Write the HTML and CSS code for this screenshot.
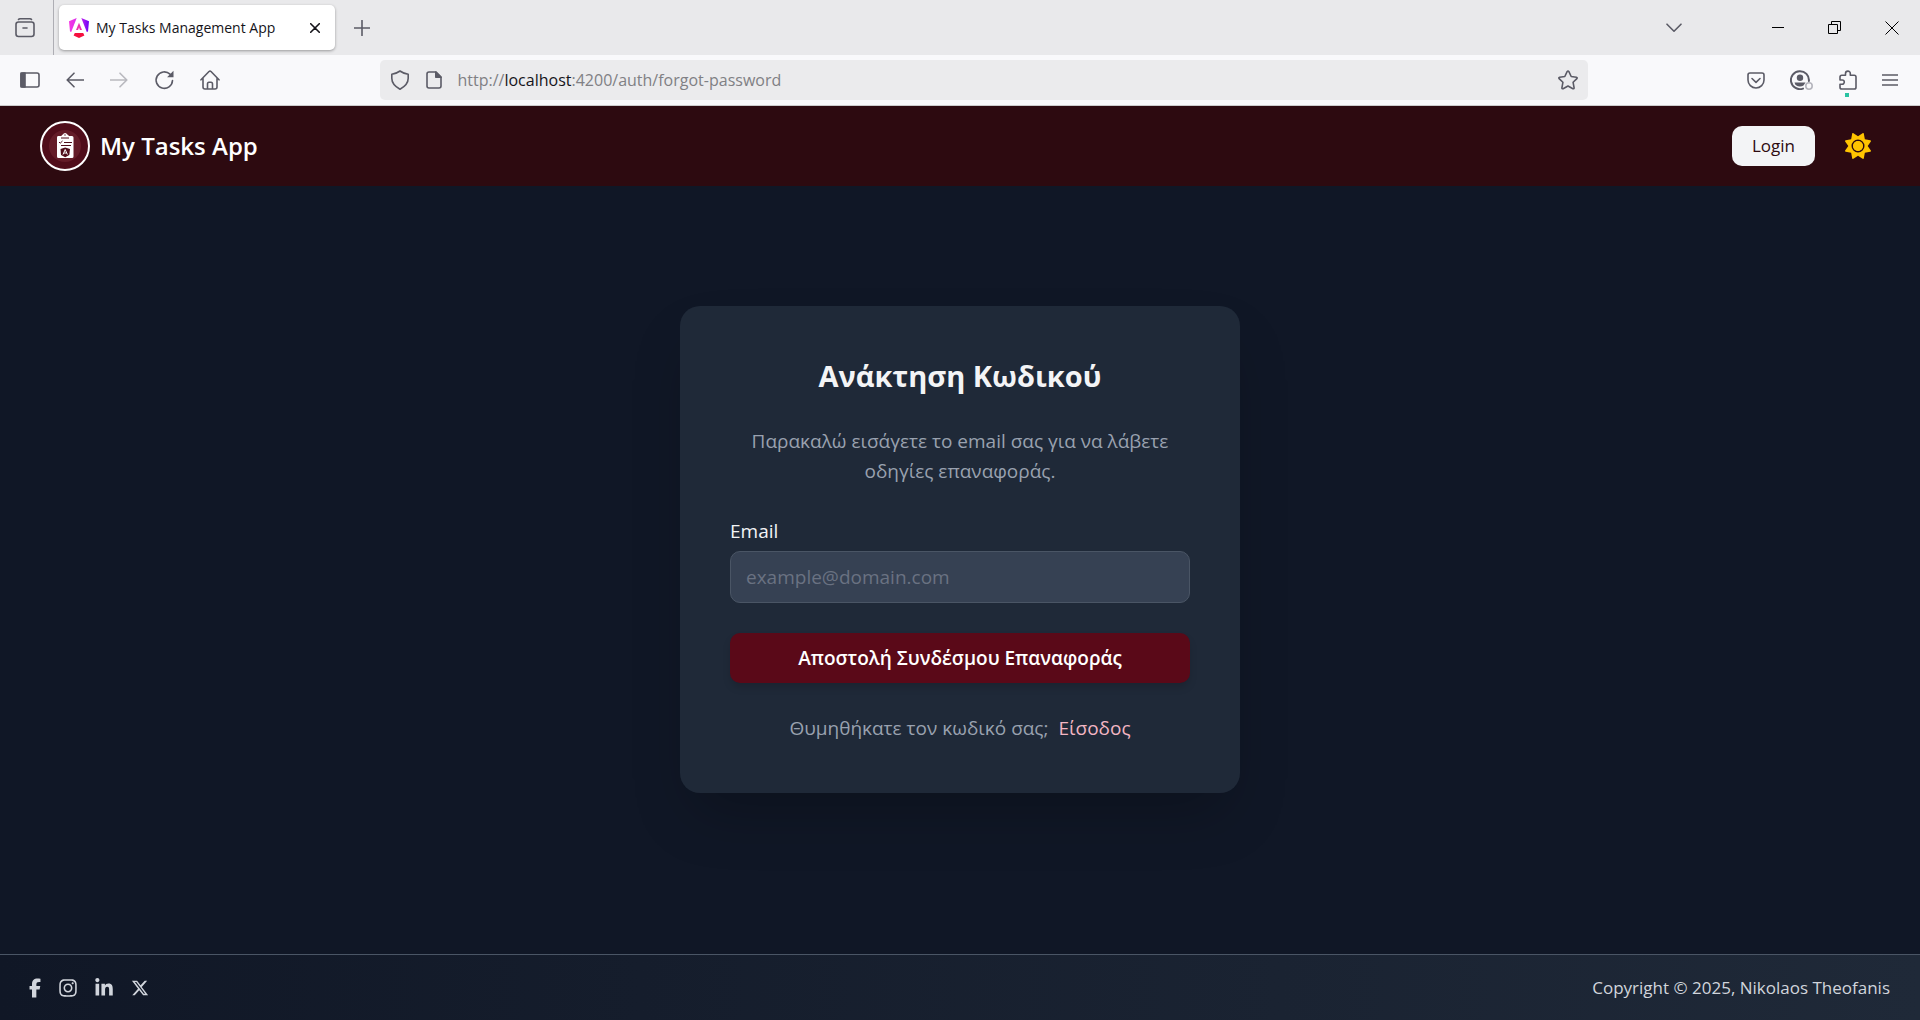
FILE: index.html
```html
<!DOCTYPE html>
<html lang="el">
<head>
<meta charset="utf-8">
<meta name="viewport" content="width=device-width, initial-scale=1">
<title>My Tasks Management App</title>
<link rel="stylesheet" href="styles.css">
</head>
<body>
<div class="browser">
  <div class="tab-strip">
    <button class="tool tool-recent" aria-label="Recent browsing">
      <svg width="20" height="20" viewBox="0 0 20 20" class="line"><path d="M3.500 1.500Q4 .8 5 .8h10q1 0 1.500.7"/><rect x="1" y="4" width="18" height="14.500" rx="2.500"/><path d="M8 10h4"/></svg>
    </button>
    <div class="tab">
      <svg width="20" height="20" viewBox="0 0 20 20" aria-hidden="true">
        <defs><linearGradient id="ng" x1="0" y1="0" x2="1" y2="0"><stop offset="0" stop-color="#f637e3"/><stop offset=".55" stop-color="#d02af0"/><stop offset="1" stop-color="#6a00f5"/></linearGradient></defs>
        <path fill="url(#ng)" d="M0 3.300 7.700 0 2.200 14 1 13.500zM20 3.300 12.300 0l5.500 14 1.200-.5z"/>
        <path fill="#ee2fae" d="M10 4.800l3 7.200H7z"/>
        <path fill="#fff" d="M10 9.600l.9 2.400H9.100z"/>
        <path fill="#f5103f" d="M5.800 15h8.400l1.200 2.500L10 20l-5.400-2.500z"/>
      </svg>
      <span class="tab-title">My Tasks Management App</span>
      <button class="tool tab-close" aria-label="Close tab"><svg width="10" height="10" viewBox="0 0 10 10" class="line dark"><path d="M.7.7l8.600 8.600M9.300.7.7 9.300"/></svg></button>
    </div>
    <button class="tool tool-new" aria-label="New tab"><svg width="16" height="16" viewBox="0 0 16 16" class="line"><path d="M8 .5v15M.5 8h15"/></svg></button>
    <div class="window-controls">
      <button class="tool" aria-label="List all tabs"><svg width="16" height="10" viewBox="0 0 16 10" class="line"><path d="M1 1.200l7 7 7-7"/></svg></button>
      <button class="tool win" aria-label="Minimize"><svg width="12" height="12" viewBox="0 0 12 12" class="win-line"><path d="M0 5.500h12"/></svg></button>
      <button class="tool win" aria-label="Restore"><svg width="13" height="13" viewBox="0 0 13 13" class="win-line"><path d="M.5 3.500h9v9h-9zM3.500 3V.5h9v9H10"/></svg></button>
      <button class="tool win" aria-label="Close"><svg width="14" height="14" viewBox="0 0 14 14" class="win-line"><path d="M.5.5l13 13M13.500.5l-13 13"/></svg></button>
    </div>
  </div>
  <div class="nav-bar">
    <div class="nav-buttons">
      <button class="tool" aria-label="Sidebar"><svg width="20" height="16" viewBox="0 0 20 16" class="line"><rect x="1" y="1" width="18" height="14" rx="2"/><path fill="#5b5b66" d="M1 1h4v14H1z"/></svg></button>
      <button class="tool" aria-label="Back"><svg width="18" height="16" viewBox="0 0 18 16" class="line"><path d="M17.500 8H1.500M8 1.200 1.200 8 8 14.800"/></svg></button>
      <button class="tool faded" aria-label="Forward"><svg width="18" height="16" viewBox="0 0 18 16" class="line"><path d="M.5 8h16M10 1.200 16.800 8 10 14.800"/></svg></button>
      <button class="tool" aria-label="Reload"><svg width="20" height="20" viewBox="0 0 20 20" class="line"><path d="M18.500 10.500A8.200 8.200 0 1 1 16 4.200"/><path fill="#5b5b66" stroke="none" d="M19.500.8v6.400H13.100z"/></svg></button>
      <button class="tool" aria-label="Home"><svg width="20" height="20" viewBox="0 0 20 20" class="line"><path d="M1 9.800 9 1.500q1-.9 2 0l8 8.300M3 8.200V17q0 2 2 2h10q2 0 2-2V8.200M7.500 19v-5q0-1.800 1.500-1.800h2q1.500 0 1.500 1.800v5"/></svg></button>
    </div>
    <div class="url-bar">
      <svg width="20" height="20" viewBox="0 0 20 20" class="line"><path d="M10 1c2.500 1.800 5 2.800 8.200 3.300v4c0 4.800-3.500 8.400-8.200 11-4.700-2.600-8.200-6.200-8.200-11v-4C5 3.800 7.500 2.800 10 1z"/></svg>
      <svg width="16" height="18" viewBox="0 0 16 18" class="line"><path d="M3 1h7l5 5v9q0 2-2 2H3q-2 0-2-2V3q0-2 2-2z"/><path fill="#5b5b66" d="M9.800 1l5.200 5.200H9.800z"/></svg>
      <span class="url">http://<span class="host">localhost</span>:4200/auth/forgot-password</span>
      <button class="tool" aria-label="Bookmark"><svg width="20" height="20" viewBox="0 0 20 20" class="line"><path d="M9.100 1.600q.9-1.300 1.800 0l2.300 4.900 5.200.7q1.300.3.500 1.400l-3.800 3.700 1 5.500q.1 1.300-1.200.9L10 16l-4.900 2.700q-1.300.4-1.200-.9l1-5.500L1.100 8.600q-.8-1.100.5-1.400l5.200-.7z"/></svg></button>
    </div>
    <div class="nav-extras">
      <button class="tool" aria-label="Pocket"><svg width="18" height="17" viewBox="0 0 18 17" class="line"><path d="M3 1h12q2 0 2 2v5a8 8 0 0 1-16 0V3q0-2 2-2z"/><path d="M5 6.500l4 3.800 4-3.800"/></svg></button>
      <button class="tool" aria-label="Account"><svg width="24" height="20" viewBox="0 0 24 20" class="line"><path d="M13 18.600A9 9 0 1 1 18.900 11" stroke-width="2"/><circle cx="10" cy="7.800" r="3.200" fill="#5b5b66" stroke="none"/><path fill="#5b5b66" stroke="none" d="M4.500 12.500h11l-2 3q-1.500 1-3.500 1-4.500 0-5.500-4z"/><circle cx="19" cy="16" r="3.200" stroke="#b5b5bd"/></svg></button>
      <button class="tool extension" aria-label="Extensions"><svg width="18" height="20" viewBox="0 0 18 20" class="line"><path d="M1 10V7q0-1.800 1.800-1.800H6.500V3.500a2.400 2.400 0 0 1 4.800 0v1.700h4Q17 5.200 17 7v10.200q0 1.800-1.700 1.800H2.800Q1 19 1 17.200v-3h2.200a2.100 2.100 0 0 0 0-4.200z"/></svg></button>
      <button class="tool" aria-label="Menu"><svg width="16" height="14" viewBox="0 0 16 14" class="line"><path d="M.5 2h15M.5 7h15M.5 12h15"/></svg></button>
    </div>
  </div>
</div>

<header class="app-header">
  <a class="brand" href="#">
    <svg width="50" height="50" viewBox="0 0 50 50" aria-hidden="true">
      <circle cx="25" cy="25" r="24" fill="#500d1a" stroke="#fff" stroke-width="2"/>
      <circle cx="25" cy="25" r="16" fill="#641c28"/>
      <path fill="#fff" d="M18 15h3.500q0-1.500 1.500-1.500a2.200 2.200 0 0 1 4.200 0q1.500 0 1.500 1.500H32q1.500 0 1.500 1.500v19q0 1.500-1.500 1.500H18.500Q17 37 17 35.500v-19Q17 15 18 15z"/>
      <path stroke="#500d1a" fill="none" d="M21 17h8M19 21l1.200 1.200L22.500 20M24 21.500h8M21 24.500h10M24.300 14h1.400"/>
      <path fill="#500d1a" d="M20.500 28l4.700-1.500L30 28l-.7 6-4.100 2.300L21 34z"/>
      <path fill="none" stroke="#fff" d="M23 33.500l2.200-5 2.200 5M24 32h2.500"/>
    </svg>
    <span class="brand-name">My Tasks App</span>
  </a>
  <div class="header-actions">
    <button class="login">Login</button>
    <button class="theme" aria-label="Theme"><svg width="26" height="26" viewBox="0 0 512 512" fill="#ffc400"><path d="M361.500 1.200c5 2.100 8.600 6.600 9.600 11.900L391 121l107.900 19.800c5.300 1 9.800 4.600 11.900 9.600s1.500 10.700-1.600 15.200L446.900 256l62.300 90.300c3.100 4.500 3.700 10.200 1.600 15.200s-6.600 8.600-11.900 9.600L391 391 371.100 498.900c-1 5.300-4.600 9.800-9.600 11.900s-10.700 1.500-15.200-1.600L256 446.900l-90.300 62.300c-4.500 3.100-10.200 3.700-15.200 1.600s-8.600-6.600-9.600-11.900L121 391 13.100 371.100c-5.300-1-9.800-4.600-11.900-9.600s-1.500-10.700 1.600-15.200L65.100 256 2.800 165.700c-3.100-4.500-3.700-10.200-1.600-15.200s6.600-8.600 11.900-9.600L121 121 140.900 13.100c1-5.300 4.600-9.800 9.600-11.900s10.700-1.500 15.200 1.600L256 65.100 346.300 2.800c4.500-3.100 10.200-3.700 15.200-1.600zM160 256a96 96 0 1 1 192 0 96 96 0 1 1-192 0zm224 0a128 128 0 1 0-256 0 128 128 0 1 0 256 0z"/><circle cx="256" cy="256" r="98"/></svg></button>
  </div>
</header>

<main class="page">
  <form class="card">
    <h1 class="card-title">Ανάκτηση Κωδικού</h1>
    <p class="card-text">Παρακαλώ εισάγετε το email σας για να λάβετε οδηγίες επαναφοράς.</p>
    <label class="field-label" for="email">Email</label>
    <input class="field" id="email" type="email" placeholder="example@domain.com">
    <button class="submit" type="submit">Αποστολή Συνδέσμου Επαναφοράς</button>
    <p class="card-foot"><span>Θυμηθήκατε τον κωδικό σας;</span><a href="#">Είσοδος</a></p>
  </form>
</main>

<footer class="app-footer">
  <nav class="social">
    <a href="#" aria-label="Facebook"><svg width="12" height="20" viewBox="0 0 320 512"><path d="M80 299.300V512H196V299.300h86.500l18-97.800H196V166.900c0-51.700 20.300-71.500 72.700-71.500 16.300 0 29.400.4 37 1.200V7.900C291.400 4 256.400 0 236.200 0 129.300 0 80 50.500 80 159.400v42.100H14v97.800H80z"/></svg></a>
    <a href="#" aria-label="Instagram"><svg width="18" height="20" viewBox="0 0 448 512"><path d="M224.100 141c-63.600 0-114.900 51.300-114.900 114.900s51.300 114.900 114.900 114.900S339 319.500 339 255.900 287.700 141 224.100 141zm0 189.600c-41.100 0-74.700-33.500-74.700-74.700s33.500-74.700 74.700-74.700 74.700 33.500 74.700 74.700-33.600 74.700-74.700 74.700zm146.400-194.300c0 14.900-12 26.800-26.800 26.800-14.900 0-26.800-12-26.800-26.800s12-26.800 26.800-26.800 26.800 12 26.800 26.800zm76.100 27.200c-1.700-35.900-9.900-67.700-36.200-93.900-26.200-26.200-58-34.400-93.900-36.200-37-2.100-147.900-2.100-184.900 0-35.800 1.700-67.600 9.900-93.900 36.100s-34.400 58-36.200 93.900c-2.100 37-2.100 147.900 0 184.900 1.700 35.900 9.900 67.700 36.200 93.900s58 34.400 93.900 36.200c37 2.100 147.900 2.100 184.900 0 35.900-1.700 67.700-9.900 93.900-36.200 26.200-26.200 34.400-58 36.200-93.900 2.100-37 2.100-147.800 0-184.800zM398.800 388c-7.800 19.600-22.900 34.700-42.600 42.600-29.500 11.700-99.500 9-132.100 9s-102.700 2.600-132.100-9c-19.600-7.800-34.700-22.900-42.600-42.600-11.700-29.500-9-99.500-9-132.100s-2.600-102.700 9-132.100c7.800-19.600 22.900-34.700 42.600-42.600 29.500-11.700 99.500-9 132.100-9s102.700-2.600 132.100 9c19.600 7.800 34.700 22.900 42.600 42.600 11.700 29.500 9 99.500 9 132.100s2.700 102.700-9 132.100z"/></svg></a>
    <a href="#" aria-label="LinkedIn"><svg width="18" height="20" viewBox="0 0 448 512"><path d="M100.300 448H7.400V148.900h92.900zM53.800 108.100C24.100 108.100 0 83.500 0 53.800a53.800 53.800 0 0 1 107.600 0c0 29.700-24.100 54.300-53.800 54.300zM447.900 448h-92.700V302.400c0-34.700-.7-79.200-48.300-79.200-48.300 0-55.700 37.700-55.700 76.700V448h-92.800V148.900h89.100v40.800h1.300c12.400-23.500 42.700-48.300 87.900-48.300 94 0 111.300 61.900 111.300 142.300V448z"/></svg></a>
    <a href="#" aria-label="X"><svg width="18" height="18" viewBox="0 0 512 512"><path d="M389.200 48h70.600L305.600 224.200 487 464H345L233.700 318.600 106.500 464H35.800L200.700 275.500 26.800 48H172.400L272.900 180.900 389.200 48zM364.400 421.800h39.100L151.100 88h-42L364.400 421.800z"/></svg></a>
  </nav>
  <span class="copyright">Copyright © 2025, Nikolaos Theofanis</span>
</footer>
</body>
</html>
```
FILE: styles.css
```css
* { box-sizing: border-box; margin: 0; }

body {
  min-height: 100vh;
  display: flex;
  flex-direction: column;
  background: #101726;
  font-family: "Open Sans", "Noto Sans", sans-serif;
  font-size: 19px;
  line-height: 30px;
}

button { border: 0; font: inherit; cursor: pointer; }
a { text-decoration: none; }
svg { display: block; flex: none; }

/* Browser chrome */
.browser { background: #f9f9fb; border-bottom: 1px solid #ccc; }
.tool { display: grid; place-items: center; padding: 0; background: none; }
.line { fill: none; stroke: #5b5b66; stroke-width: 1.6; stroke-linecap: round; stroke-linejoin: round; }
.line.dark { stroke: #15141a; }
.win-line { fill: none; stroke: #000; stroke-width: 1; }
.faded { opacity: .4; }

.tab-strip { display: flex; align-items: center; height: 55px; background: #e9e9eb; }
.tool-recent { width: 54px; height: 55px; border-right: 1px solid #aeaeb4; padding-right: 3px; }
.tab {
  display: flex;
  align-items: center;
  gap: 7px;
  width: 276px;
  height: 45px;
  margin-left: 5px;
  padding: 0 15px 0 10px;
  border-radius: 5px;
  background: #fff;
  box-shadow: 0 1px 3px rgba(0, 0, 0, .35);
  color: #15141a;
}
.tab-title { flex: 1; font-size: 14px; white-space: nowrap; }
.tool-new { margin-left: 19px; }
.window-controls { display: flex; align-items: center; margin-left: auto; height: 55px; }
.window-controls .win { width: 57px; height: 55px; }
.window-controls .tool:first-child { margin-right: 67px; }

.nav-bar { display: flex; align-items: center; justify-content: space-between; height: 50px; padding: 0 22px 0 20px; }
.nav-buttons { display: flex; align-items: center; gap: 26px; }
.url-bar {
  display: flex;
  align-items: center;
  flex: 0 1 1208px;
  height: 40px;
  padding: 0 10px;
  gap: 16px;
  border-radius: 5px;
  background: #ebebed;
}
.url { flex: 1; font-size: 16px; color: #808084; }
.host { color: #15141a; }
.nav-extras { display: flex; align-items: center; gap: 25px; }
.extension { position: relative; }
.extension::after {
  content: "";
  position: absolute;
  left: 6px;
  bottom: -7px;
  width: 4px;
  height: 4px;
  background: #2ac3a2;
}

/* Application header */
.app-header {
  display: flex;
  align-items: center;
  justify-content: space-between;
  height: 80px;
  padding: 0 49px 0 40px;
  background: #2d0a10;
}
.brand { display: flex; align-items: center; gap: 10px; color: #fff; }
.brand-name { font-size: 24px; font-weight: 600; }
.header-actions { display: flex; align-items: center; gap: 30px; }
.login { height: 40px; padding: 0 20px; border-radius: 10px; background: #f3f4f6; color: #2d0a10; font-size: 17px; }
.theme { padding: 0; background: none; }

/* Password recovery card */
.page { flex: 1; padding: 120px 20px; }
.card {
  display: flex;
  flex-direction: column;
  max-width: 560px;
  margin: 0 auto;
  padding: 50px;
  border-radius: 20px;
  background: #1f2938;
  box-shadow: 0 30px 60px -15px rgba(0, 0, 0, .25);
}
.card-title { margin-bottom: 30px; color: #f3f4f6; font-size: 29px; font-weight: 700; line-height: 40px; text-align: center; }
.card-text { margin-bottom: 30px; color: #99a1af; text-align: center; }
.field-label { margin-bottom: 5px; color: #f3f4f6; }
.field {
  height: 52px;
  margin-bottom: 30px;
  padding: 0 15px;
  border: 1px solid #4a5565;
  border-radius: 10px;
  background: #364153;
  color: #f3f4f6;
  font: inherit;
}
.field::placeholder { color: #6a7282; opacity: 1; }
.submit {
  height: 50px;
  margin-bottom: 30px;
  border-radius: 10px;
  background: #5a0918;
  box-shadow: 0 5px 8px -1px rgba(0, 0, 0, .15);
  color: #fff;
  font-weight: 600;
}
.card-foot { display: flex; justify-content: center; gap: 10px; color: #99a1af; }
.card-foot a { color: #f3b6c3; }

/* Application footer */
.app-footer {
  display: flex;
  align-items: center;
  justify-content: space-between;
  height: 66px;
  padding: 0 30px 0 29px;
  border-top: 1px solid #4a5565;
  background: linear-gradient(90deg, #101726, #1f2938);
  color: #d1d5dc;
}
.social { display: flex; align-items: center; gap: 18px; }
.social svg { fill: #d1d5dc; }
.copyright { font-size: 17px; }
```
